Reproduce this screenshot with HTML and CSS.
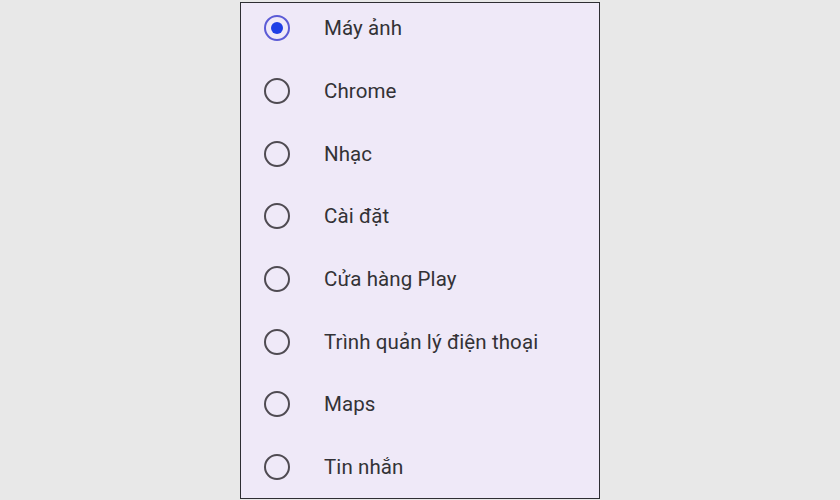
FILE: index.html
```html
<!DOCTYPE html>
<html lang="vi">
<head>
<meta charset="utf-8">
<link rel="stylesheet" href="styles.css">
</head>
<body>
<div class="stage">
  <div class="panel">
    <ul class="list">
      <li class="row"><span class="radio checked"></span><span class="label">Máy ảnh</span></li>
      <li class="row"><span class="radio"></span><span class="label">Chrome</span></li>
      <li class="row"><span class="radio"></span><span class="label">Nhạc</span></li>
      <li class="row"><span class="radio"></span><span class="label">Cài đặt</span></li>
      <li class="row"><span class="radio"></span><span class="label">Cửa hàng Play</span></li>
      <li class="row"><span class="radio"></span><span class="label">Trình quản lý điện thoại</span></li>
      <li class="row"><span class="radio"></span><span class="label">Maps</span></li>
      <li class="row"><span class="radio"></span><span class="label">Tin nhắn</span></li>
    </ul>
  </div>
</div>
</body>
</html>
```
FILE: styles.css
```css
html, body {
  margin: 0;
  padding: 0;
  background: #e8e8e8;
  font-family: Roboto, "Noto Sans", sans-serif;
}
.stage {
  width: 840px;
  height: 500px;
  display: flex;
  justify-content: center;
  padding-top: 2px;
  box-sizing: border-box;
}
.panel {
  width: 360px;
  height: 497px;
  box-sizing: border-box;
  border: 1px solid #2e2e33;
  background: #efe9f8;
  overflow: hidden;
}
.list {
  list-style: none;
  margin: -6px 0 0 0;
  padding: 0;
}
.row {
  height: 62.7px;
  display: flex;
  align-items: center;
  padding-left: 23px;
}
.radio {
  width: 26px;
  height: 26px;
  box-sizing: border-box;
  border: 2.5px solid #4f4b52;
  border-radius: 50%;
  display: flex;
  align-items: center;
  justify-content: center;
  flex: none;
}
.radio.checked {
  border-color: #5b5bd6;
}
.radio.checked::after {
  content: "";
  width: 12px;
  height: 12px;
  border-radius: 50%;
  background: #1f3fe6;
}
.label {
  margin-left: 34px;
  font-size: 20.5px;
  color: #333236;
  letter-spacing: 0.1px;
}
```
